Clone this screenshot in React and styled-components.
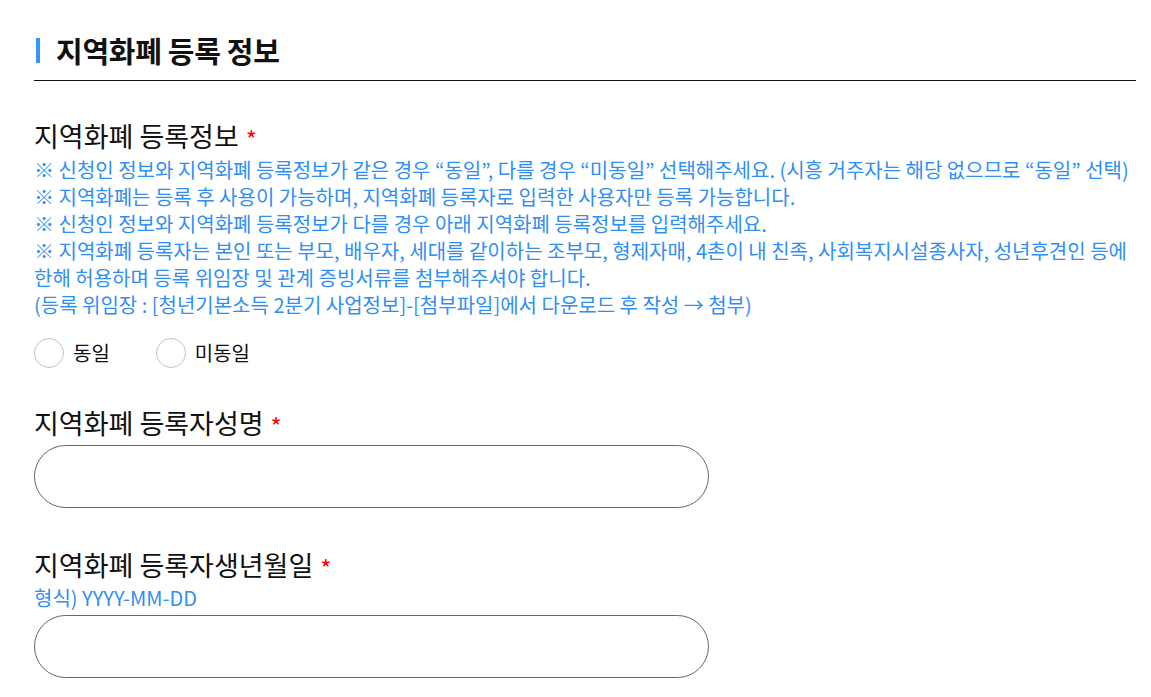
import React, { useState } from "react";
import styled, { createGlobalStyle } from "styled-components";

const GlobalStyle = createGlobalStyle`
  body {
    margin: 0;
    background: #fff;
    font-family: "Noto Sans CJK KR", "Noto Sans", sans-serif;
    color: #111;
  }
`;

const Page = styled.div`
  padding: 30px 15px 0 34px;
`;

const Title = styled.h2`
  display: flex;
  align-items: center;
  gap: 16px;
  margin: 0;
  padding: 0 0 10px;
  border-bottom: 1px solid #111;
  font-size: 29px;
  font-weight: 700;
  letter-spacing: -0.3px;
  line-height: 40px;
  &::before {
    content: "";
    display: block;
    width: 4px;
    height: 25px;
    margin-left: 2px;
    background: #3396f5;
  }
`;

const Field = styled.section`
  margin-top: ${(p) => p.top}px;
`;

const Label = styled.div`
  display: flex;
  align-items: flex-start;
  gap: 7px;
  height: 36px;
  font-size: 27px;
  line-height: 36px;
`;

const Star = styled.span`
  color: #f00;
  font-size: 24px;
  line-height: 31px;
  padding-top: 5px;
`;

const Notes = styled.ul`
  list-style: none;
  margin: 2px 0 0;
  padding: 0;
  color: #2f8ff2;
  font-size: 20px;
  line-height: 27px;
`;

const RadioRow = styled.div`
  display: flex;
  gap: 46px;
  margin-top: 20px;
`;

const RadioLabel = styled.label`
  display: flex;
  align-items: center;
  gap: 9px;
  font-size: 20px;
  line-height: 30px;
  cursor: pointer;
`;

const Circle = styled.span`
  box-sizing: border-box;
  width: 30px;
  height: 30px;
  border-radius: 50%;
  border: 1px solid #c4c4c4;
  background: ${(p) => (p.on ? "radial-gradient(#2f8ff2 40%, #fff 45%)" : "#fff")};
`;

const Input = styled.input`
  display: block;
  box-sizing: border-box;
  width: 675px;
  height: 63px;
  margin-top: ${(p) => p.gap}px;
  padding: 0 24px;
  border: 1px solid #666;
  border-radius: 32px;
  font-size: 18px;
  font-family: inherit;
  outline: none;
`;

const Hint = styled.div`
  color: #2f8ff2;
  font-size: 20px;
  line-height: 26px;
  margin-top: 2px;
`;

const notes = [
  "※ 신청인 정보와 지역화폐 등록정보가 같은 경우 “동일”, 다를 경우 “미동일” 선택해주세요. (시흥 거주자는 해당 없으므로 “동일” 선택)",
  "※ 지역화폐는 등록 후 사용이 가능하며, 지역화폐 등록자로 입력한 사용자만 등록 가능합니다.",
  "※ 신청인 정보와 지역화폐 등록정보가 다를 경우 아래 지역화폐 등록정보를 입력해주세요.",
  "※ 지역화폐 등록자는 본인 또는 부모, 배우자, 세대를 같이하는 조부모, 형제자매, 4촌이 내 친족, 사회복지시설종사자, 성년후견인 등에 한해 허용하며 등록 위임장 및 관계 증빙서류를 첨부해주셔야 합니다.",
  "(등록 위임장 : [청년기본소득 2분기 사업정보]-[첨부파일]에서 다운로드 후 작성 → 첨부)",
];

const App = () => {
  const [same, setSame] = useState(null);
  return (
    <Page>
      <GlobalStyle />
      <Title>지역화폐 등록 정보</Title>

      <Field top={37}>
        <Label>
          지역화폐 등록정보<Star>*</Star>
        </Label>
        <Notes>
          {notes.map((n) => (
            <li key={n}>{n}</li>
          ))}
        </Notes>
        <RadioRow>
          {["동일", "미동일"].map((v) => (
            <RadioLabel key={v} onClick={() => setSame(v)}>
              <Circle on={same === v} />
              {v}
            </RadioLabel>
          ))}
        </RadioRow>
      </Field>

      <Field top={37}>
        <Label>
          지역화폐 등록자성명<Star>*</Star>
        </Label>
        <Input gap={4} />
      </Field>

      <Field top={39}>
        <Label>
          지역화폐 등록자생년월일<Star>*</Star>
        </Label>
        <Hint>형식) YYYY-MM-DD</Hint>
        <Input gap={4} />
      </Field>
    </Page>
  );
};

export default App;
